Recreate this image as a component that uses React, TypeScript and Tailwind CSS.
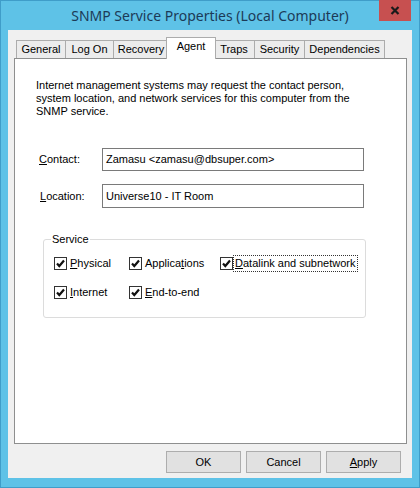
import React from "react";

const Check = () => (
  <span className="flex h-[13px] w-[13px] shrink-0 items-center justify-center border border-[#333333] bg-white">
    <svg width="11" height="11" viewBox="0 0 11 11">
      <path d="M2 5.5 L4.3 8 L9 2.5" fill="none" stroke="#111" strokeWidth="2.2" />
    </svg>
  </span>
);

const Tab = ({ label, w, first }: { label: string; w: number; first?: boolean }) => (
  <div
    className={`flex h-[18px] items-center justify-center border border-b-0 border-[#acacac] bg-[#ececec] text-[11px] leading-none text-black ${first ? "" : "-ml-px"}`}
    style={{ width: w }}
  >
    {label}
  </div>
);

export default function App() {
  return (
    <div
      className="flex h-[488px] w-[420px] flex-col border border-[#3f9dc9] bg-[#5ec2e7]"
      style={{ fontFamily: '"Liberation Sans", Arial, sans-serif' }}
    >
      <div className="relative flex h-[29px] items-center justify-center">
        <span
          className="text-[14px] text-[#1c3a57]"
          style={{ fontFamily: '"Noto Sans", "Open Sans", sans-serif' }}
        >
          SNMP Service Properties (Local Computer)
        </span>
        <div className="absolute right-[8px] top-[-1px] flex h-[21px] w-[32px] items-center justify-center bg-[#c75050]">
          <svg width="10" height="9" viewBox="0 0 10 9">
            <path d="M1.5 1 L8.5 8 M8.5 1 L1.5 8" stroke="#1a1a1a" strokeWidth="2.2" />
          </svg>
        </div>
      </div>
      <div className="mx-[7px] flex h-[448px] flex-col bg-[#f0f0f0] px-[6px] pt-[7px]">
        <div className="flex h-[21px] items-end pl-[2px]">
          <Tab label="General" w={50} first />
          <Tab label="Log On" w={49} />
          <Tab label="Recovery" w={56} />
          <div className="relative z-10 -mb-px -ml-[3px] -mr-[2px] flex h-[22px] w-[50px] items-start justify-center border border-b-0 border-[#acacac] bg-white pt-[3px] text-[11px] leading-none text-black">
            Agent
          </div>
          <Tab label="Traps" w={42} />
          <Tab label="Security" w={51} />
          <Tab label="Dependencies" w={81} />
        </div>
        <div className="flex h-[386px] w-[393px] flex-col border border-[#8e8f8f] bg-white pl-[21px] pt-[20px] text-[11px] leading-[13px] text-black">
          <p>
            Internet management systems may request the contact person,
            <br />
            system location, and network services for this computer from the
            <br />
            SNMP service.
          </p>
          <div className="mt-[30px] flex items-center pl-[3px]">
            <span className="w-[63px]">
              <span className="underline">C</span>ontact:
            </span>
            <div className="flex h-[23px] w-[262px] items-center border border-[#7a7a7a] px-[3px]">
              Zamasu &lt;zamasu@dbsuper.com&gt;
            </div>
          </div>
          <div className="mt-[13px] flex items-center pl-[4px]">
            <span className="w-[62px]">
              <span className="underline">L</span>ocation:
            </span>
            <div className="flex h-[24px] w-[262px] items-center border border-[#7a7a7a] px-[3px]">
              Universe10 - IT Room
            </div>
          </div>
          <div className="relative ml-[7px] mt-[31px] h-[79px] w-[323px] rounded-[3px] border border-[#dcdcdc] pl-[10px] pt-[17px]">
            <span className="absolute left-[7px] top-[-7px] bg-white px-[1px]">Service</span>
            <div className="grid grid-cols-[75px_91px_auto] gap-y-[16px]">
              <div className="flex h-[13px] items-center">
                <Check />
                <span className="ml-[3px]">
                  <span className="underline">P</span>hysical
                </span>
              </div>
              <div className="flex h-[13px] items-center">
                <Check />
                <span className="ml-[3px]">
                  Applica<span className="underline">t</span>ions
                </span>
              </div>
              <div className="flex h-[13px] items-center">
                <Check />
                <span className="border border-dotted border-[#333] pl-[1px] pr-[2px] py-[1px]">
                  <span className="underline">D</span>atalink and subnetwork
                </span>
              </div>
              <div className="flex h-[13px] items-center">
                <Check />
                <span className="ml-[3px]">
                  <span className="underline">I</span>nternet
                </span>
              </div>
              <div className="flex h-[13px] items-center">
                <Check />
                <span className="ml-[3px]">
                  <span className="underline">E</span>nd-to-end
                </span>
              </div>
            </div>
          </div>
        </div>
        <div className="mt-[7px] flex justify-end gap-[5px] pr-[5px] text-[11px] text-black">
          <button className="flex h-[22px] w-[75px] items-center justify-center border border-[#adadad] bg-[#e1e1e1]">
            OK
          </button>
          <button className="flex h-[22px] w-[75px] items-center justify-center border border-[#adadad] bg-[#e1e1e1]">
            Cancel
          </button>
          <button className="flex h-[22px] w-[75px] items-center justify-center border border-[#adadad] bg-[#e1e1e1]">
            <span>
              <span className="underline">A</span>pply
            </span>
          </button>
        </div>
      </div>
    </div>
  );
}
